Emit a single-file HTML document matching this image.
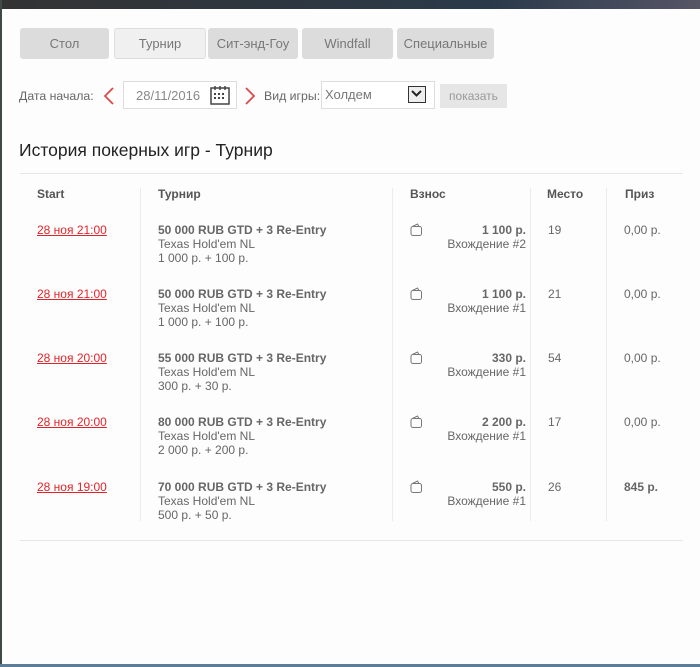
<!DOCTYPE html>
<html><head><meta charset="utf-8"><style>
body{margin:0;width:700px;height:667px;background:#fdfdfd;font-family:"Liberation Sans",sans-serif;position:relative;overflow:hidden;color:#666}
.a{position:absolute}
.tab{position:absolute;top:28px;height:31px;background:#dcdcdc;border-radius:3px;font-size:13px;color:#777;text-align:center;line-height:31px}
.hd{font-size:12px;font-weight:bold;color:#555;top:187px}
.vl{position:absolute;width:1px;background:#ececec;top:188px;height:333px}
.t{font-size:12px;line-height:14px}
.lnk{color:#e2242a;text-decoration:underline;font-size:12px}
.b{font-weight:bold;color:#666}
</style></head><body>
<div class="a" style="left:0;top:0;width:700px;height:9px;background:linear-gradient(90deg,#333,#2a3a4a 70%,#556)"></div>
<div class="a" style="left:0;top:0;width:2px;height:667px;background:#3d4a48"></div>
<div class="a" style="left:0;top:664px;width:700px;height:3px;background:#5d7c95"></div>
<div class="tab" style="left:20px;width:89px">Стол</div>
<div class="tab" style="left:114px;width:90px;background:#f0f0f0;border:1px solid #ddd;height:29px;line-height:29px">Турнир</div>
<div class="tab" style="left:208px;width:90px">Сит-энд-Гоу</div>
<div class="tab" style="left:302px;width:91px">Windfall</div>
<div class="tab" style="left:397px;width:97px">Специальные</div>
<div class="a" style="left:19px;top:89px;font-size:12.3px;color:#666">Дата начала:</div>
<svg class="a" style="left:102px;top:86px" width="14" height="20"><path d="M11 2 L3 10 L11 18" fill="none" stroke="#e04848" stroke-width="1.8"/></svg>
<div class="a" style="left:123px;top:81px;width:112px;height:26px;border:1px solid #ddd;background:#fff"></div>
<div class="a" style="left:136px;top:88px;font-size:13px;color:#888">28/11/2016</div>
<svg class="a" style="left:210px;top:85px" width="21" height="21"><rect x="1" y="3" width="18" height="16" fill="none" stroke="#444" stroke-width="1.5"/><path d="M5 1v4M10 1v4M15 1v4" stroke="#444" stroke-width="1.5"/><g fill="#444"><rect x="4" y="8" width="2" height="2"/><rect x="8" y="8" width="2" height="2"/><rect x="12" y="8" width="2" height="2"/><rect x="4" y="12" width="2" height="2"/><rect x="8" y="12" width="2" height="2"/><rect x="12" y="12" width="2" height="2"/></g></svg>
<svg class="a" style="left:243px;top:86px" width="14" height="20"><path d="M3 2 L11 10 L3 18" fill="none" stroke="#e04848" stroke-width="1.8"/></svg>
<div class="a" style="left:321px;top:81px;width:112px;height:26px;border:1px solid #ddd;background:#fff"></div>
<div class="a" style="left:264px;top:89px;font-size:12.3px;color:#666">Вид игры:</div>
<div class="a" style="left:325px;top:87px;font-size:13px;color:#777">Холдем</div>
<div class="a" style="left:408px;top:86px;width:16px;height:15px;border:1px solid #333;background:#eee"></div>
<svg class="a" style="left:411px;top:90px" width="11" height="8"><path d="M1 1l4.5 4.5L10 1" fill="none" stroke="#222" stroke-width="2"/></svg>
<div class="a" style="left:440px;top:84px;width:67px;height:24px;background:#e6e6e6;font-size:12px;color:#999;text-align:center;line-height:24px">показать</div>
<div class="a" style="left:19px;top:140px;font-size:17.5px;color:#222">История покерных игр - Турнир</div>
<div class="a" style="left:20px;top:173px;width:663px;height:1px;background:#e6e6e6"></div>
<div class="a" style="left:20px;top:540px;width:663px;height:1px;background:#e6e6e6"></div>
<div class="vl" style="left:140px"></div><div class="vl" style="left:392px"></div><div class="vl" style="left:530px"></div><div class="vl" style="left:606px"></div>
<div class="a hd" style="left:37px">Start</div>
<div class="a hd" style="left:158px">Турнир</div>
<div class="a hd" style="left:410px">Взнос</div>
<div class="a hd" style="left:547px">Место</div>
<div class="a hd" style="left:625px">Приз</div>

<div class="a" style="left:0;top:223px;width:700px">
<div class="a lnk" style="left:37px">28 ноя 21:00</div>
<div class="a t" style="left:158px"><span class="b">50 000 RUB GTD + 3 Re-Entry</span><br>Texas Hold'em NL<br>1 000 р. + 100 р.</div>
<svg class="a" style="left:410px;top:0px" width="13" height="14"><rect x="1" y="3.5" width="10.5" height="9" rx="2" fill="none" stroke="#777"/><path d="M2.5 3.5l5-2.5 1.5 2.5" fill="none" stroke="#777"/></svg>
<div class="a t" style="left:430px;width:96px;text-align:right"><span class="b">1 100 р.</span><br>Вхождение #2</div>
<div class="a t" style="left:548px">19</div><div class="a t" style="left:624px">0,00 р.</div>
</div>
<div class="a" style="left:0;top:287px;width:700px">
<div class="a lnk" style="left:37px">28 ноя 21:00</div>
<div class="a t" style="left:158px"><span class="b">50 000 RUB GTD + 3 Re-Entry</span><br>Texas Hold'em NL<br>1 000 р. + 100 р.</div>
<svg class="a" style="left:410px;top:0px" width="13" height="14"><rect x="1" y="3.5" width="10.5" height="9" rx="2" fill="none" stroke="#777"/><path d="M2.5 3.5l5-2.5 1.5 2.5" fill="none" stroke="#777"/></svg>
<div class="a t" style="left:430px;width:96px;text-align:right"><span class="b">1 100 р.</span><br>Вхождение #1</div>
<div class="a t" style="left:548px">21</div><div class="a t" style="left:624px">0,00 р.</div>
</div>
<div class="a" style="left:0;top:351px;width:700px">
<div class="a lnk" style="left:37px">28 ноя 20:00</div>
<div class="a t" style="left:158px"><span class="b">55 000 RUB GTD + 3 Re-Entry</span><br>Texas Hold'em NL<br>300 р. + 30 р.</div>
<svg class="a" style="left:410px;top:0px" width="13" height="14"><rect x="1" y="3.5" width="10.5" height="9" rx="2" fill="none" stroke="#777"/><path d="M2.5 3.5l5-2.5 1.5 2.5" fill="none" stroke="#777"/></svg>
<div class="a t" style="left:430px;width:96px;text-align:right"><span class="b">330 р.</span><br>Вхождение #1</div>
<div class="a t" style="left:548px">54</div><div class="a t" style="left:624px">0,00 р.</div>
</div>
<div class="a" style="left:0;top:415px;width:700px">
<div class="a lnk" style="left:37px">28 ноя 20:00</div>
<div class="a t" style="left:158px"><span class="b">80 000 RUB GTD + 3 Re-Entry</span><br>Texas Hold'em NL<br>2 000 р. + 200 р.</div>
<svg class="a" style="left:410px;top:0px" width="13" height="14"><rect x="1" y="3.5" width="10.5" height="9" rx="2" fill="none" stroke="#777"/><path d="M2.5 3.5l5-2.5 1.5 2.5" fill="none" stroke="#777"/></svg>
<div class="a t" style="left:430px;width:96px;text-align:right"><span class="b">2 200 р.</span><br>Вхождение #1</div>
<div class="a t" style="left:548px">17</div><div class="a t" style="left:624px">0,00 р.</div>
</div>
<div class="a" style="left:0;top:480px;width:700px">
<div class="a lnk" style="left:37px">28 ноя 19:00</div>
<div class="a t" style="left:158px"><span class="b">70 000 RUB GTD + 3 Re-Entry</span><br>Texas Hold'em NL<br>500 р. + 50 р.</div>
<svg class="a" style="left:410px;top:0px" width="13" height="14"><rect x="1" y="3.5" width="10.5" height="9" rx="2" fill="none" stroke="#777"/><path d="M2.5 3.5l5-2.5 1.5 2.5" fill="none" stroke="#777"/></svg>
<div class="a t" style="left:430px;width:96px;text-align:right"><span class="b">550 р.</span><br>Вхождение #1</div>
<div class="a t" style="left:548px">26</div><div class="a t b" style="left:624px">845 р.</div>
</div>
</body></html>
